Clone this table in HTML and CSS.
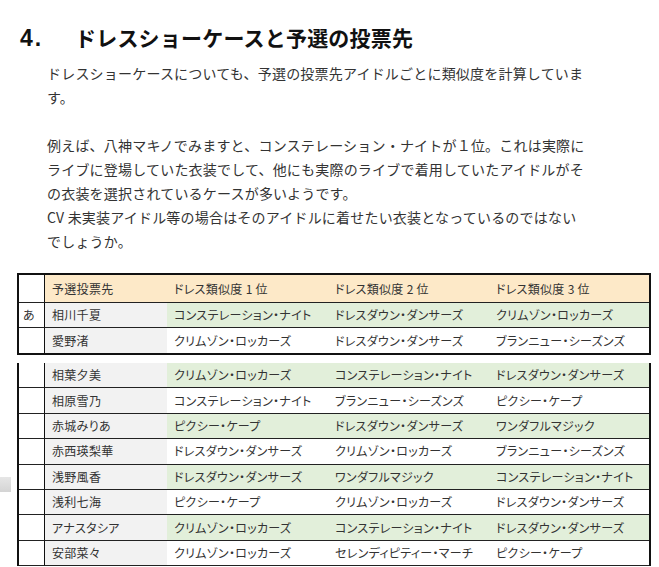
FILE: index.html
```html
<!DOCTYPE html>
<html lang="ja">
<head>
<meta charset="utf-8">
<title>ドレスショーケースと予選の投票先</title>
<link rel="stylesheet" href="styles.css">
</head>
<body>
<div class="page">
  <h2 class="heading"><span class="num">4.</span><span class="title">ドレスショーケースと予選の投票先</span></h2>
  <p class="para">ドレスショーケースについても、予選の投票先アイドルごとに類似度を計算しています。</p>
  <p class="para">例えば、八神マキノでみますと、コンステレーション・ナイトが１位。これは実際にライブに登場していた衣装でして、他にも実際のライブで着用していたアイドルがその衣装を選択されているケースが多いようです。<br>CV 未実装アイドル等の場合はそのアイドルに着せたい衣装となっているのではないでしょうか。</p>

  <table class="sheet sheet-top">
    <colgroup>
      <col class="c0"><col class="c1"><col class="c2"><col class="c3"><col class="c4">
    </colgroup>
    <tr class="head">
      <td class="idx"></td><td>予選投票先</td><td>ドレス類似度 1 位</td><td>ドレス類似度 2 位</td><td>ドレス類似度 3 位</td>
    </tr>
    <tr class="odd">
      <td class="idx">あ</td><td class="name">相川千夏</td><td>コンステレーション・ナイト</td><td>ドレスダウン・ダンサーズ</td><td>クリムゾン・ロッカーズ</td>
    </tr>
    <tr class="even last">
      <td class="idx"></td><td class="name">愛野渚</td><td>クリムゾン・ロッカーズ</td><td>ドレスダウン・ダンサーズ</td><td>ブランニュー・シーズンズ</td>
    </tr>
  </table>

  <table class="sheet sheet-cont">
    <colgroup>
      <col class="c0"><col class="c1"><col class="c2"><col class="c3"><col class="c4">
    </colgroup>
    <tr class="odd">
      <td class="idx"></td><td class="name">相葉夕美</td><td>クリムゾン・ロッカーズ</td><td>コンステレーション・ナイト</td><td>ドレスダウン・ダンサーズ</td>
    </tr>
    <tr class="even">
      <td class="idx"></td><td class="name">相原雪乃</td><td>コンステレーション・ナイト</td><td>ブランニュー・シーズンズ</td><td>ピクシー・ケープ</td>
    </tr>
    <tr class="odd">
      <td class="idx"></td><td class="name">赤城みりあ</td><td>ピクシー・ケープ</td><td>ドレスダウン・ダンサーズ</td><td>ワンダフルマジック</td>
    </tr>
    <tr class="even">
      <td class="idx"></td><td class="name">赤西瑛梨華</td><td>ドレスダウン・ダンサーズ</td><td>クリムゾン・ロッカーズ</td><td>ブランニュー・シーズンズ</td>
    </tr>
    <tr class="odd">
      <td class="idx"></td><td class="name">浅野風香</td><td>ドレスダウン・ダンサーズ</td><td>ワンダフルマジック</td><td>コンステレーション・ナイト</td>
    </tr>
    <tr class="even">
      <td class="idx"></td><td class="name">浅利七海</td><td>ピクシー・ケープ</td><td>クリムゾン・ロッカーズ</td><td>ドレスダウン・ダンサーズ</td>
    </tr>
    <tr class="odd">
      <td class="idx"></td><td class="name">アナスタシア</td><td>クリムゾン・ロッカーズ</td><td>コンステレーション・ナイト</td><td>ドレスダウン・ダンサーズ</td>
    </tr>
    <tr class="even">
      <td class="idx"></td><td class="name">安部菜々</td><td>クリムゾン・ロッカーズ</td><td>セレンディピティー・マーチ</td><td>ピクシー・ケープ</td>
    </tr>
  </table>
  <div class="edge-tab"></div>
</div>
</body>
</html>
```

FILE: styles.css
```css
html, body {
  margin: 0;
  padding: 0;
  background: #ffffff;
}

.page {
  position: relative;
  font-family: "Noto Sans CJK JP", "Noto Sans", sans-serif;
  color: #333333;
  padding-top: 22px;
}

.heading {
  margin: 0 0 0 20px;
  display: flex;
  align-items: baseline;
  height: 30px;
  font-size: 21px;
  font-weight: bold;
  color: #111111;
  line-height: 30px;
}

.heading .num {
  width: 55px;
  font-family: "Liberation Sans", "DejaVu Sans", sans-serif;
  font-size: 23px;
  font-weight: bold;
  letter-spacing: 2px;
}

.heading .title {
  letter-spacing: 0.2px;
}

.para {
  margin: 9px 0 0 47px;
  width: 541px;
  font-size: 14px;
  letter-spacing: 0.2px;
  line-height: 24px;
  color: #333333;
}

.para + .para {
  margin-top: 24px;
}

.sheet {
  margin-left: 17px;
  width: 634px;
  border-collapse: separate;
  border-spacing: 0;
  table-layout: fixed;
  font-size: 12px;
  font-feature-settings: "palt";
  letter-spacing: 0.3px;
  color: #333333;
}

.sheet col.c0 { width: 26px; }
.sheet col.c1 { width: 122px; }
.sheet col.c2 { width: 162px; }
.sheet col.c3 { width: 161px; }
.sheet col.c4 { width: 159px; }

.sheet td {
  padding: 0 4px 0 7px;
  height: 25px;
  line-height: 24px;
  white-space: nowrap;
  overflow: hidden;
  box-sizing: border-box;
  border-bottom: 1px solid #222222;
}

.sheet td:nth-child(n+4) {
  padding-left: 6px;
}

.sheet td.idx {
  border-right: 1px solid #111111;
  padding: 0 0 0 4px;
  background: #ffffff;
}

.sheet-top {
  margin-top: 20px;
  border: 2px solid #111111;
}

.sheet-top tr.head td {
  height: 28px;
  line-height: 27px;
  background: #fde9c8;
}

.sheet-top tr.last td {
  border-bottom: none;
}

.sheet-top tr.head td.idx {
  background: #ffffff;
}

.sheet-cont {
  margin-top: 8px;
  border-left: 2px solid #111111;
  border-right: 2px solid #111111;
}

.sheet-cont td {
  height: 25.4px;
}

.sheet tr.odd td { background: #e2efda; }
.sheet tr.even td { background: #ffffff; }
.sheet tr td.name { background: #f2f2f2; }
.sheet tr td.idx { background: #ffffff; }

.edge-tab {
  position: absolute;
  left: 0;
  top: 477px;
  width: 11px;
  height: 15px;
  background: linear-gradient(#e6e6e6, #d4d4d4);
}
```
